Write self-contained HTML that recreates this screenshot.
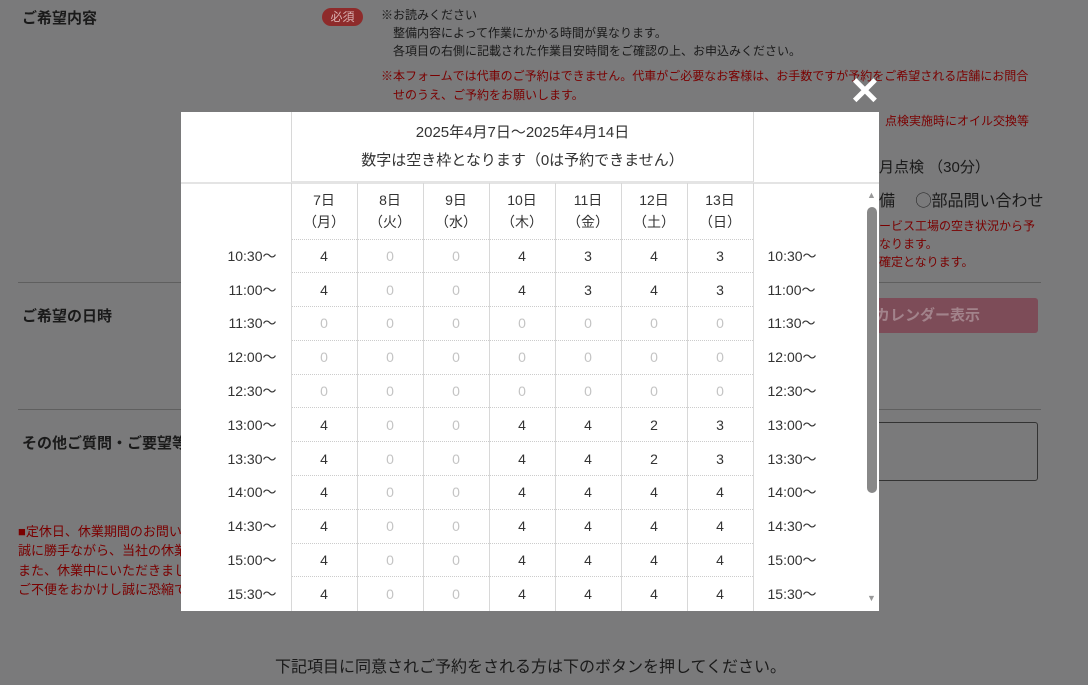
<!DOCTYPE html>
<html><head><meta charset="utf-8">
<style>
*{margin:0;padding:0;box-sizing:border-box}
body{width:1088px;height:685px;overflow:hidden;background:#7a7a7b;font-family:"Liberation Sans","Noto Sans CJK JP",sans-serif;position:relative;color:#1a1a1a}
.a{position:absolute;white-space:nowrap}
.r{color:#7a0000}
.s{font-size:12px;line-height:18px}
.hr{position:absolute;left:18px;width:1023px;height:1px;background:#5f5f5f}
#m{position:absolute;left:181px;top:112px;width:698px;height:499px;background:#fff;overflow:hidden}
table{border-collapse:collapse;position:absolute;left:0;top:71px;font-size:14px;color:#333}
td{height:33.8px;text-align:center;border-left:1px solid #d8d8d8;border-right:1px solid #d8d8d8;border-top:1px dotted #ccc;padding:0}
td.t{border:none;text-align:right;padding-right:14px;width:110px}
td.t2{border:none;text-align:left;padding-left:14px;width:112px}
td.d{width:66px}
td.z{color:#c4c4c4}
tr.h td{height:56px;line-height:22px;border-top:none}
.b13{font-size:13px;line-height:19.5px}
</style></head><body>
<div class="a" style="left:22px;top:7px;font-size:15px;font-weight:bold">ご希望内容</div>
<div class="a" style="left:322px;top:8px;width:41px;height:18px;border-radius:9px;background:#8e2b2b;color:#d9b0b0;font-size:12px;text-align:center;line-height:18px">必須</div>
<div class="a s" style="left:381px;top:6px">※お読みください</div>
<div class="a s" style="left:393px;top:24px">整備内容によって作業にかかる時間が異なります。</div>
<div class="a s" style="left:393px;top:42px">各項目の右側に記載された作業目安時間をご確認の上、お申込みください。</div>
<div class="a s r" style="left:381px;top:67px">※本フォームでは代車のご予約はできません。代車がご必要なお客様は、お手数ですが予約をご希望される店舗にお問合</div>
<div class="a s r" style="left:393px;top:86px">せのうえ、ご予約をお願いします。</div>
<div class="a s r" style="left:885px;top:112px">点検実施時にオイル交換等</div>
<div class="a" style="left:879px;top:156px;font-size:15px">月点検 （30分）</div>
<div class="a" style="left:879px;top:187px;font-size:16px">備 　◯部品問い合わせ</div>
<div class="a s r" style="left:879px;top:217px">ービス工場の空き状況から予</div>
<div class="a s r" style="left:879px;top:235px">なります。</div>
<div class="a s r" style="left:879px;top:253px">確定となります。</div>
<div class="hr" style="top:282px"></div>
<div class="a" style="left:22px;top:305px;font-size:15px;font-weight:bold">ご希望の日時</div>
<div class="a" style="left:855px;top:298px;width:183px;height:35px;background:#7d4c58;border-radius:3px;color:#a2838b;font-size:15px;font-weight:bold;line-height:35px;padding-left:20px">カレンダー表示</div>
<div class="hr" style="top:409px"></div>
<div class="a" style="left:22px;top:432px;font-size:15px;font-weight:bold">その他ご質問・ご要望等</div>
<div class="a" style="left:860px;top:422px;width:178px;height:59px;border:1px solid #333;border-radius:3px"></div>
<div class="a b13 r" style="left:18px;top:522px">■定休日、休業期間のお問い</div>
<div class="a b13 r" style="left:18px;top:541px">誠に勝手ながら、当社の休業</div>
<div class="a b13 r" style="left:18px;top:561px">また、休業中にいただきまし</div>
<div class="a b13 r" style="left:18px;top:580px">ご不便をおかけし誠に恐縮で</div>
<div class="a" style="left:275px;top:653px;font-size:16px">下記項目に同意されご予約をされる方は下のボタンを押してください。</div>
<div class="a" style="left:849px;top:70px;font-size:38px;line-height:44px;color:#fff;font-weight:bold">✕</div>
<div id="m">
<div class="a" style="left:110px;top:0;width:463px;height:71px;border-left:1px solid #d8d8d8;border-right:1px solid #d8d8d8;border-bottom:2px solid #e4e4e4;text-align:center;font-size:15px;color:#333;line-height:28px;padding-top:7px">2025年4月7日～2025年4月14日<br>数字は空き枠となります（0は予約できません）</div>
<div class="a" style="left:0;top:70px;width:698px;height:2px;background:#e4e4e4"></div>
<table>
<tr class="h"><td class="t"></td><td class="d">7日<br>（月）</td><td class="d">8日<br>（火）</td><td class="d">9日<br>（水）</td><td class="d">10日<br>（木）</td><td class="d">11日<br>（金）</td><td class="d">12日<br>（土）</td><td class="d">13日<br>（日）</td><td class="t2"></td></tr>
<tr><td class="t">10:30～</td><td>4</td><td class="z">0</td><td class="z">0</td><td>4</td><td>3</td><td>4</td><td>3</td><td class="t2">10:30～</td></tr>
<tr><td class="t">11:00～</td><td>4</td><td class="z">0</td><td class="z">0</td><td>4</td><td>3</td><td>4</td><td>3</td><td class="t2">11:00～</td></tr>
<tr><td class="t">11:30～</td><td class="z">0</td><td class="z">0</td><td class="z">0</td><td class="z">0</td><td class="z">0</td><td class="z">0</td><td class="z">0</td><td class="t2">11:30～</td></tr>
<tr><td class="t">12:00～</td><td class="z">0</td><td class="z">0</td><td class="z">0</td><td class="z">0</td><td class="z">0</td><td class="z">0</td><td class="z">0</td><td class="t2">12:00～</td></tr>
<tr><td class="t">12:30～</td><td class="z">0</td><td class="z">0</td><td class="z">0</td><td class="z">0</td><td class="z">0</td><td class="z">0</td><td class="z">0</td><td class="t2">12:30～</td></tr>
<tr><td class="t">13:00～</td><td>4</td><td class="z">0</td><td class="z">0</td><td>4</td><td>4</td><td>2</td><td>3</td><td class="t2">13:00～</td></tr>
<tr><td class="t">13:30～</td><td>4</td><td class="z">0</td><td class="z">0</td><td>4</td><td>4</td><td>2</td><td>3</td><td class="t2">13:30～</td></tr>
<tr><td class="t">14:00～</td><td>4</td><td class="z">0</td><td class="z">0</td><td>4</td><td>4</td><td>4</td><td>4</td><td class="t2">14:00～</td></tr>
<tr><td class="t">14:30～</td><td>4</td><td class="z">0</td><td class="z">0</td><td>4</td><td>4</td><td>4</td><td>4</td><td class="t2">14:30～</td></tr>
<tr><td class="t">15:00～</td><td>4</td><td class="z">0</td><td class="z">0</td><td>4</td><td>4</td><td>4</td><td>4</td><td class="t2">15:00～</td></tr>
<tr><td class="t">15:30～</td><td>4</td><td class="z">0</td><td class="z">0</td><td>4</td><td>4</td><td>4</td><td>4</td><td class="t2">15:30～</td></tr>
</table>
<div class="a" style="left:686px;top:95px;width:10px;height:286px;background:#888;border-radius:5px"></div>
<div class="a" style="left:686px;top:78px;font-size:9px;color:#999">▲</div>
<div class="a" style="left:686px;top:481px;font-size:9px;color:#999">▼</div>
</div>
</body></html>
